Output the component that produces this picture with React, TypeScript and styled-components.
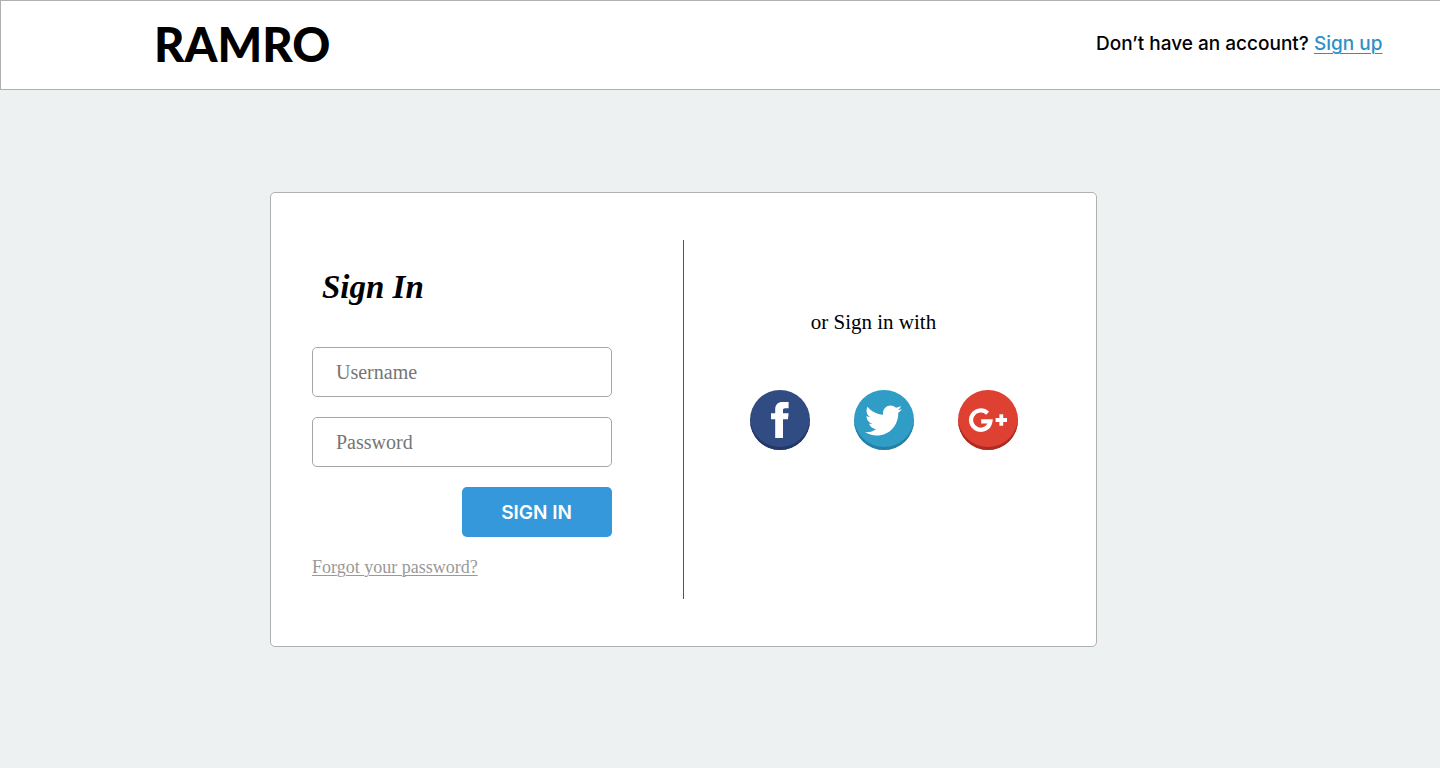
import React from "react";
import styled, { createGlobalStyle } from "styled-components";
import { FaTwitter } from "react-icons/fa";

const sans = `Inter, "Liberation Sans", sans-serif`;
const serif = `"Liberation Serif", serif`;

const GlobalStyle = createGlobalStyle`
  *, *::before, *::after { box-sizing: border-box; }
  body { margin: 0; background: #edf1f2; color: #000; font-family: ${sans}; }
`;

const Header = styled.header`
  display: flex;
  align-items: center;
  justify-content: space-between;
  min-height: 90px;
  padding: 0 4% 2px 153px;
  background: #fff;
  border: 1px solid #b0b0b0;
  border-right: 0;
`;

const Brand = styled.div`
  font: 900 47px/52px Lato, sans-serif;
`;

const Account = styled.p`
  margin: 0;
  font: 500 19px/24px ${sans};
`;

const SignUpLink = styled.a`
  color: #2f8fc9;
  text-underline-offset: 3px;
  text-decoration-thickness: 1px;
`;

const Main = styled.main`
  padding: 102px 16px 48px 18.75%;
`;

const Card = styled.section`
  display: grid;
  grid-template-columns: 1fr 1fr;
  max-width: 827px;
  padding: 47px 0;
  background: #fff;
  border: 1px solid #b0b0b0;
  border-radius: 5px;
`;

const LoginForm = styled.form`
  display: flex;
  flex-direction: column;
  align-items: flex-start;
  gap: 20px;
  padding: 27px 71px 22px 41px;
  border-right: 1px solid #555;
`;

const Title = styled.h1`
  margin: 0;
  padding: 0 10px 20px;
  font: italic 700 33px/40px ${serif};
`;

const Field = styled.input`
  width: 100%;
  height: 50px;
  padding: 0 23px;
  background: #fff;
  border: 1px solid #a6a6a6;
  border-radius: 5px;
  font: 20px/24px ${serif};
  &::placeholder { color: #757575; opacity: 1; }
`;

const Submit = styled.button`
  align-self: flex-end;
  width: 150px;
  height: 50px;
  padding: 2px 0 0;
  border: 0;
  border-radius: 5px;
  background: #3498db;
  color: #fff;
  font: 600 19px/24px ${sans};
  cursor: pointer;
`;

const ForgotLink = styled.a`
  color: #999;
  font: 18px/20px ${serif};
  text-underline-offset: 2px;
  text-decoration-thickness: 1px;
`;

const Social = styled.div`
  display: flex;
  flex-direction: column;
  align-items: flex-start;
  gap: 56px;
  padding: 70px 0 0 66px;
`;

const SocialTitle = styled.h2`
  width: 248px;
  margin: 0;
  font: 400 21px/24px ${serif};
  text-align: center;
`;

const SocialList = styled.div`
  display: flex;
  gap: 44px;
`;

const SocialButton = styled.button<{ $color: string; $edge: string }>`
  display: flex;
  align-items: center;
  justify-content: center;
  width: 60px;
  height: 60px;
  padding: 0;
  border: 0;
  border-radius: 50%;
  background: ${(p) => p.$color};
  box-shadow: inset 0 -3px 0 ${(p) => p.$edge};
  color: #fff;
  cursor: pointer;
`;

const FacebookMark = () => (
  <svg width="18" height="36" viewBox="0 0 18 36" fill="currentColor" aria-hidden="true">
    <path d="M4.2 36V17.2H0v-6h4.2V7.6C4.2 2.6 6.8 0 11.8 0H17.6v6.2h-3.4c-1.8 0-2.2.7-2.2 2.2v2.8h5.6l-.7 6H12V36Z" />
  </svg>
);

const GooglePlusMark = () => (
  <svg width="40" height="26" viewBox="0 0 40 26" fill="none" stroke="currentColor" strokeWidth="4.2" aria-hidden="true">
    <path d="M19.6 6.2A9.7 9.7 0 1 0 22.4 14.4H13.2" />
    <path d="M27.6 13H39M33.3 7.3V18.7" strokeWidth="3.8" />
  </svg>
);

export default function App() {
  return (
    <>
      <GlobalStyle />
      <Header>
        <Brand>RAMRO</Brand>
        <Account>
          Don’t have an account? <SignUpLink href="#signup">Sign up</SignUpLink>
        </Account>
      </Header>
      <Main>
        <Card>
          <LoginForm onSubmit={(e) => e.preventDefault()}>
            <Title>Sign In</Title>
            <Field type="text" placeholder="Username" aria-label="Username" />
            <Field type="password" placeholder="Password" aria-label="Password" />
            <Submit type="submit">SIGN IN</Submit>
            <ForgotLink href="#forgot">Forgot your password?</ForgotLink>
          </LoginForm>
          <Social>
            <SocialTitle>or Sign in with</SocialTitle>
            <SocialList>
              <SocialButton $color="#314b83" $edge="#243766" aria-label="Facebook">
                <FacebookMark />
              </SocialButton>
              <SocialButton $color="#309dc6" $edge="#2680a6" aria-label="Twitter">
                <FaTwitter size={37} />
              </SocialButton>
              <SocialButton $color="#de4032" $edge="#aa2b22" aria-label="Google Plus">
                <GooglePlusMark />
              </SocialButton>
            </SocialList>
          </Social>
        </Card>
      </Main>
    </>
  );
}
